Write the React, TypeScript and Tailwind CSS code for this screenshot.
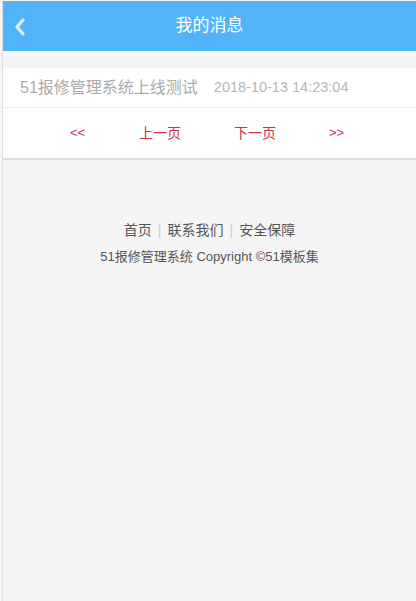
import React from "react";

export default function App() {
  const font = { fontFamily: '"Liberation Sans", "Noto Sans CJK SC", sans-serif' };
  return (
    <div className="min-h-[601px] bg-[#f5f5f5] pl-[2px]" style={font}>
      <div className="min-h-[601px] border-l border-[#dedede] pt-[1px]">
        <header className="relative flex h-[50px] items-center justify-center bg-[#51b4f9]">
          <svg className="absolute left-[10px] top-[17px]" width="14" height="18" viewBox="0 0 14 18">
            <polyline points="10,2 4,9 10,16" fill="none" stroke="#dbeefc" strokeWidth="3.2" strokeLinecap="round" strokeLinejoin="round" />
          </svg>
          <span className="text-[17px] text-white">我的消息</span>
        </header>
        <div className="h-[17px]" />
        <div className="border-b-2 border-[#dddddd] bg-white">
          <div className="flex h-[40px] items-center border-b border-[#ececec] pl-[17px]">
            <span className="text-[16px] text-[#aaaaaa]">51报修管理系统上线测试</span>
            <span className="ml-[16px] text-[14.5px] text-[#b5b5b5]">2018-10-13 14:23:04</span>
          </div>
          <div className="relative h-[50px] text-[14px] text-[#c9324f]">
            <span className="absolute left-[67px] top-[15px] text-[13px]">&lt;&lt;</span>
            <span className="absolute left-[136px] top-[15px]">上一页</span>
            <span className="absolute left-[231px] top-[15px]">下一页</span>
            <span className="absolute left-[326px] top-[15px] text-[13px]">&gt;&gt;</span>
          </div>
        </div>
        <footer className="mt-[60px] flex flex-col items-center text-[#555555]">
          <div className="flex items-center text-[14px] leading-[20px]">
            <span>首页</span>
            <span className="mx-[6px] text-[#cccccc]">|</span>
            <span>联系我们</span>
            <span className="mx-[6px] text-[#cccccc]">|</span>
            <span>安全保障</span>
          </div>
          <div className="mt-[7px] text-[13px] leading-[20px]">51报修管理系统 Copyright ©51模板集</div>
        </footer>
      </div>
    </div>
  );
}
